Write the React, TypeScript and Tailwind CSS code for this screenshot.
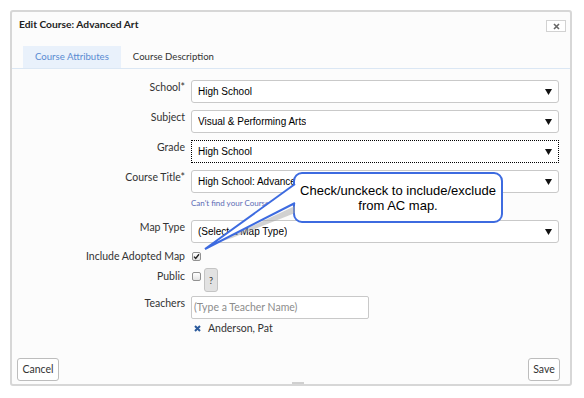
import clsx from 'clsx';

function Select({ value, focused }: { value: string; focused?: boolean }) {
  return (
    <div
      className={clsx(
        "flex h-[23px] w-[368px] items-center justify-between bg-white pl-[6px] pr-[6px] font-['Liberation_Sans',Arial,sans-serif] text-[10px] text-black",
        focused ? 'border border-dotted border-black' : 'rounded-[3px] border border-[#c9c9c9]'
      )}
    >
      <span className="truncate">{value}</span>
      <svg width="7" height="6" viewBox="0 0 7 6" className="shrink-0">
        <path d="M0 0h7L3.5 6z" fill="#111" />
      </svg>
    </div>
  );
}

function Checkbox({ checked }: { checked?: boolean }) {
  return (
    <span className="flex h-[9px] w-[9px] shrink-0 items-center justify-center rounded-[2px] border border-[#919191] bg-linear-to-b from-white to-[#e4e4e4]">
      {checked && (
        <svg width="7" height="7" viewBox="0 0 7 7">
          <path d="M1 3.6l1.7 1.9L6 1.2" stroke="#222" strokeWidth="1.4" fill="none" />
        </svg>
      )}
    </span>
  );
}

function Label({ children }: { children: React.ReactNode }) {
  return <div className="w-[173px] shrink-0 text-right text-[10.5px] leading-[14px] text-[#333]">{children}</div>;
}

export default function App() {
  return (
    <div className="h-[398px] w-full bg-white pl-[10px] pt-[10px] font-['Lato',sans-serif]">
      <div className="relative flex h-[376px] w-[562px] flex-col rounded-[3px] border-2 border-[#d7d7d7] bg-[#fcfcfc]">
        {/* header */}
        <div className="flex h-[34px] items-start justify-between pl-[7px] pr-[4px]">
          <div className="pt-[5px] text-[10.25px] font-bold leading-[14px] text-[#222]">Edit Course: Advanced Art</div>
          <button className="mt-[8px] flex h-[12px] w-[20px] items-center justify-center border border-[#d2d2d2] bg-white">
            <svg width="7" height="7" viewBox="0 0 7 7">
              <path d="M1 1l5 5M6 1l-5 5" stroke="#666" strokeWidth="1.6" />
            </svg>
          </button>
        </div>

        {/* tabs */}
        <div className="flex border-b border-[#dbe7f4] pl-[11px]">
          <div className="flex h-[22px] items-center bg-[#e9f1fb] px-[12px] text-[9.6px] text-[#5a8bd2]">Course Attributes</div>
          <div className="flex h-[22px] items-center px-[12px] text-[9.6px] text-[#333]">Course Description</div>
        </div>

        {/* form */}
        <div className="flex flex-1 flex-col pt-[11px]">
          <div className="flex gap-[6px]">
            <Label>School*</Label>
            <Select value="High School" />
          </div>
          <div className="mt-[7px] flex gap-[6px]">
            <Label>Subject</Label>
            <Select value="Visual & Performing Arts" />
          </div>
          <div className="mt-[7px] flex gap-[6px]">
            <Label>Grade</Label>
            <Select value="High School" focused />
          </div>
          <div className="mt-[7px] flex gap-[6px]">
            <Label>Course Title*</Label>
            <Select value="High School: Advanced Art" />
          </div>
          <div className="mt-[5px] pl-[179px] text-[8px] leading-[10px] text-[#5b6bb5]">Can't find your Course Title? Request one.</div>
          <div className="mt-[12px] flex gap-[6px]">
            <Label>Map Type</Label>
            <Select value="(Select a Map Type)" />
          </div>
          <div className="mt-[6px] flex items-center gap-[6px]">
            <Label>Include Adopted Map</Label>
            <span className="pl-px">
              <Checkbox checked />
            </span>
          </div>
          <div className="mt-[5px] flex items-start gap-[6px]">
            <div className="pt-px">
              <Label>Public</Label>
            </div>
            <span className="mt-[4px] pl-px">
              <Checkbox />
            </span>
            <button className="ml-[-3px] flex h-[24px] w-[14px] items-center justify-center rounded-[3px] border border-[#c4c4c4] bg-[#e2e2e2] pt-[2px] text-[9px] text-[#333]">
              ?
            </button>
          </div>
          <div className="mt-[4px] flex items-start gap-[6px]">
            <Label>Teachers</Label>
            <div className="flex h-[23px] w-[178px] items-center rounded-[2px] border border-[#c9c9c9] bg-white pl-[2px] text-[10.5px] text-[#8c8c8c]">
              (Type a Teacher Name)
            </div>
          </div>
          <div className="mt-[2px] flex items-center pl-[182px] text-[10.5px] leading-[14px] text-[#333]">
            <svg width="7" height="7" viewBox="0 0 7 7" className="mr-[7px]">
              <path d="M1 1l5 5M6 1l-5 5" stroke="#2b5a9c" strokeWidth="2" />
            </svg>
            Anderson, Pat
          </div>
        </div>

        {/* footer */}
        <div className="flex items-end justify-between pb-[3px] pl-[5px] pr-[10px]">
          <button className="h-[23px] w-[42px] rounded-[3px] border border-[#bdbdbd] bg-white text-[10.5px] text-[#333]">Cancel</button>
          <button className="h-[23px] w-[32px] rounded-[3px] border border-[#bdbdbd] bg-white text-[10.5px] text-[#333]">Save</button>
        </div>

        <div className="absolute bottom-0 left-[280px] h-[2px] w-[12px] bg-[#d0d0d0]" />

        {/* callout */}
        <div className="absolute left-[281px] top-[160px] flex h-[51px] w-[210px] items-center justify-center rounded-[9px] border-2 border-[#3d6be0] bg-white text-center font-['Liberation_Sans',Arial,sans-serif] text-[13px] leading-[15px] text-black">
          Check/unckeck to include/exclude
          <br />
          from AC map.
        </div>
        <svg className="pointer-events-none absolute left-[180px] top-[160px]" width="130" height="100" viewBox="0 0 130 100">
          <polygon points="103,34 24,71 40,66 103,41" fill="#a6a6a6" opacity="0.5" />
          <polygon points="104,12 13,77 104,31" fill="#fff" />
          <polyline points="103,12 13,77 103,31" fill="none" stroke="#3d6be0" strokeWidth="2" strokeLinejoin="miter" />
        </svg>
      </div>
    </div>
  );
}
